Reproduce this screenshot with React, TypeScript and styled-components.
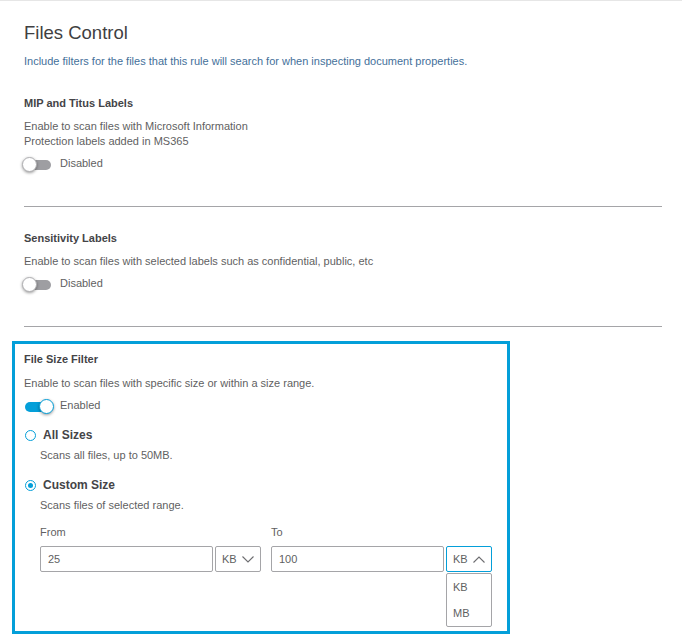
import React from "react";
import styled, { createGlobalStyle } from "styled-components";

const GlobalStyle = createGlobalStyle`
  html, body { margin: 0; padding: 0; background: #ffffff; }
  body {
    font-family: "Liberation Sans", Arial, sans-serif;
    font-size: 11px;
    line-height: 15px;
    color: #5f5f62;
  }
  * { box-sizing: border-box; }
`;

const Page = styled.div`
  border-top: 1px solid #e6e6e6;
  padding: 21px 20px 0 24px;
  width: 682px;
`;

const Title = styled.h1`
  margin: 0;
  font-size: 18.5px;
  line-height: 22px;
  font-weight: 400;
  color: #3f3f42;
`;

const Intro = styled.p`
  margin: 10px 0 3px;
  color: #44709a;
`;

const Section = styled.section`
  padding: 24px 0 34px;
`;

const Divider = styled.hr`
  margin: 0;
  border: none;
  border-top: 1px solid #a5a5a8;
`;

const Heading = styled.h3`
  margin: 0;
  font-size: 11px;
  line-height: 15px;
  font-weight: 700;
  color: #444447;
`;

const Text = styled.p<{ $gap?: number }>`
  margin: ${(p) => p.$gap ?? 8}px 0 0;
`;

const Narrow = styled.p`
  margin: 8px 0 0;
  width: 240px;
`;

const ToggleRow = styled.div<{ $gap: number }>`
  display: flex;
  align-items: center;
  gap: 9px;
  height: 17px;
  margin-top: ${(p) => p.$gap}px;
`;

const Track = styled.span<{ $on: boolean }>`
  display: flex;
  align-items: center;
  justify-content: ${(p) => (p.$on ? "flex-end" : "flex-start")};
  width: 26px;
  height: 10px;
  margin-left: 1px;
  margin-top: 2px;
  border-radius: 5px;
  background: ${(p) => (p.$on ? "#049fd9" : "#9e9ea2")};
`;

const Knob = styled.span<{ $on: boolean }>`
  width: 15px;
  height: 15px;
  flex: none;
  margin: 0 -3px;
  border-radius: 50%;
  background: #ffffff;
  border: 1.5px solid ${(p) => (p.$on ? "#049fd9" : "#b0b0b3")};
  box-shadow: 0 1px 3px rgba(0, 0, 0, 0.4);
`;

const Toggle = ({ on, gap }: { on: boolean; gap: number }) => (
  <ToggleRow $gap={gap}>
    <Track $on={on}>
      <Knob $on={on} />
    </Track>
    <span>{on ? "Enabled" : "Disabled"}</span>
  </ToggleRow>
);

const FilterBox = styled.section`
  margin: 14px 0 0 -12px;
  width: 498px;
  border: 3px solid #049fd9;
  padding: 8px 9px 59px 9px;
`;

const RadioRow = styled.label<{ $gap: number }>`
  display: flex;
  align-items: center;
  gap: 7px;
  margin-top: ${(p) => p.$gap}px;
  font-size: 12px;
  line-height: 15px;
  font-weight: 700;
  color: #444447;
`;

const RadioDot = styled.span<{ $checked: boolean }>`
  width: 11px;
  height: 11px;
  margin-left: 1px;
  flex: none;
  border-radius: 50%;
  border: 1.5px solid #049fd9;
  display: flex;
  align-items: center;
  justify-content: center;
  &::after {
    content: "";
    width: 5px;
    height: 5px;
    border-radius: 50%;
    background: ${(p) => (p.$checked ? "#049fd9" : "transparent")};
  }
`;

const SubText = styled.p`
  margin: 5px 0 0 16px;
`;

const Fields = styled.div`
  display: grid;
  grid-template-columns: 221px 221px;
  column-gap: 10px;
  margin: 12px 0 0 16px;
`;

const FieldLabel = styled.div`
  line-height: 15px;
`;

const FieldControls = styled.div`
  display: flex;
  gap: 2px;
  margin-top: 6px;
`;

const Input = styled.div`
  width: 173px;
  height: 26px;
  border: 1px solid #a5a5a8;
  border-radius: 2px;
  padding: 0 7px;
  display: flex;
  align-items: center;
`;

const SelectWrap = styled.div`
  position: relative;
  width: 46px;
`;

const SelectBox = styled.div<{ $open?: boolean }>`
  height: 26px;
  border: 1px solid ${(p) => (p.$open ? "#049fd9" : "#a5a5a8")};
  border-radius: 2px;
  padding: 0 6px;
  display: flex;
  align-items: center;
  justify-content: space-between;
`;

const Menu = styled.ul`
  position: absolute;
  top: calc(100% + 1px);
  left: 0;
  width: 100%;
  margin: 0;
  padding: 0;
  list-style: none;
  background: #ffffff;
  border: 1px solid #a5a5a8;
  border-radius: 2px;
`;

const MenuItem = styled.li`
  height: 26px;
  padding: 0 6px;
  display: flex;
  align-items: center;
`;

const Chevron = ({ up }: { up?: boolean }) => (
  <svg width="12" height="7" viewBox="0 0 12 7" fill="none">
    <polyline
      points={up ? "0.5,6.5 6,1 11.5,6.5" : "0.5,0.5 6,6 11.5,0.5"}
      stroke="#6d6d70"
      strokeWidth="1.1"
    />
  </svg>
);

export default function App() {
  return (
    <>
      <GlobalStyle />
      <Page>
        <Title>Files Control</Title>
        <Intro>
          Include filters for the files that this rule will search for when inspecting document properties.
        </Intro>

        <Section>
          <Heading>MIP and Titus Labels</Heading>
          <Narrow>
            Enable to scan files with Microsoft Information Protection labels added in MS365
          </Narrow>
          <Toggle on={false} gap={6} />
        </Section>
        <Divider />

        <Section>
          <Heading>Sensitivity Labels</Heading>
          <Text>Enable to scan files with selected labels such as confidential, public, etc</Text>
          <Toggle on={false} gap={6} />
        </Section>
        <Divider />

        <FilterBox>
          <Heading>File Size Filter</Heading>
          <Text $gap={9}>Enable to scan files with specific size or within a size range.</Text>
          <Toggle on={true} gap={6} />

          <RadioRow $gap={14}>
            <RadioDot $checked={false} />
            All Sizes
          </RadioRow>
          <SubText>Scans all files, up to 50MB.</SubText>

          <RadioRow $gap={15}>
            <RadioDot $checked={true} />
            Custom Size
          </RadioRow>
          <SubText>Scans files of selected range.</SubText>

          <Fields>
            <div>
              <FieldLabel>From</FieldLabel>
              <FieldControls>
                <Input>25</Input>
                <SelectWrap>
                  <SelectBox>
                    KB
                    <Chevron />
                  </SelectBox>
                </SelectWrap>
              </FieldControls>
            </div>
            <div>
              <FieldLabel>To</FieldLabel>
              <FieldControls>
                <Input>100</Input>
                <SelectWrap>
                  <SelectBox $open>
                    KB
                    <Chevron up />
                  </SelectBox>
                  <Menu>
                    <MenuItem>KB</MenuItem>
                    <MenuItem>MB</MenuItem>
                  </Menu>
                </SelectWrap>
              </FieldControls>
            </div>
          </Fields>
        </FilterBox>
      </Page>
    </>
  );
}
